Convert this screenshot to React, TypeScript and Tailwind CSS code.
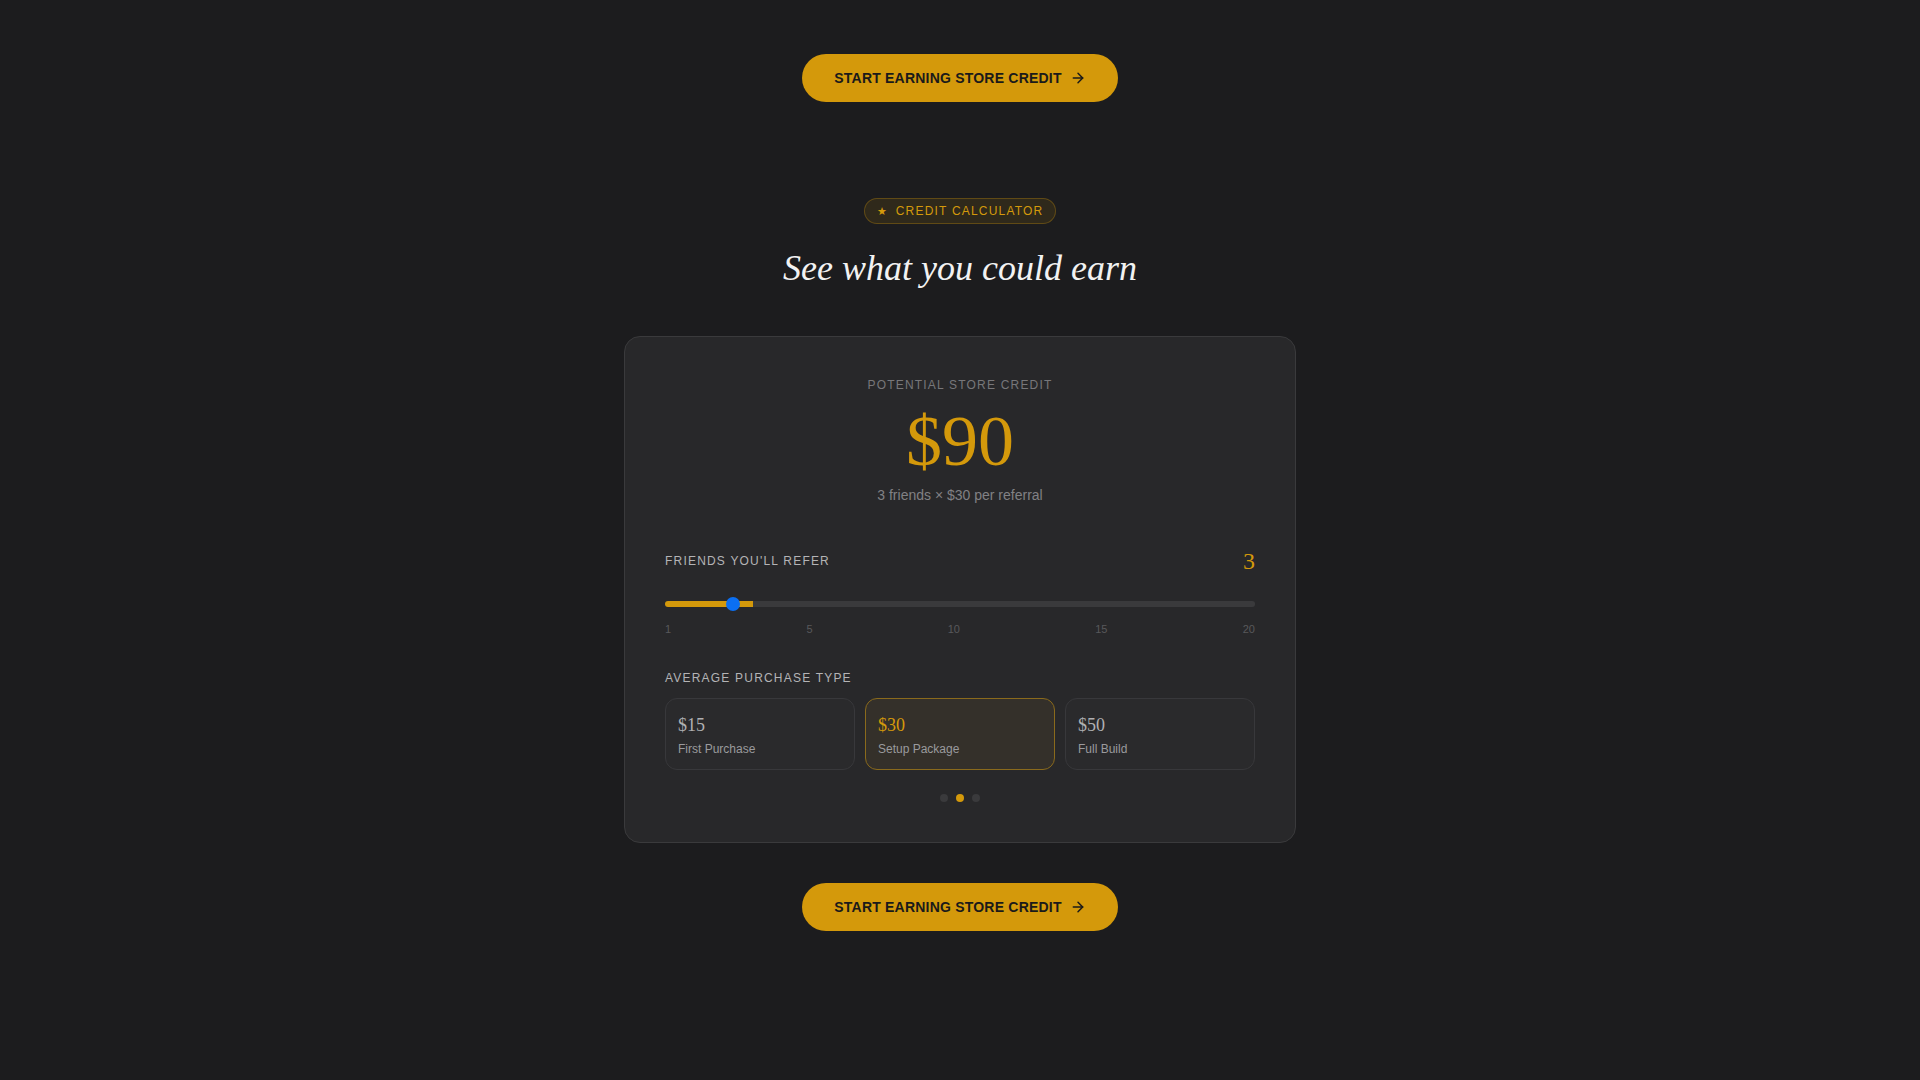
import React, { useState } from "react";
import { ArrowRight } from "lucide-react";

type Option = {
  amount: number;
  label: string;
};

const OPTIONS: Option[] = [
  { amount: 15, label: "First Purchase" },
  { amount: 30, label: "Setup Package" },
  { amount: 50, label: "Full Build" },
];

const MIN = 1;
const MAX = 20;
const TICKS = [1, 5, 10, 15, 20];

const CtaButton: React.FC = () => {
  return (
    <button
      type="button"
      className="flex items-center gap-2 rounded-full bg-[#d4990b] px-8 py-3.5 text-sm font-bold tracking-[0.015em] text-[#1a1a1a] hover:bg-[#e0a413]"
    >
      START EARNING STORE CREDIT
      <ArrowRight size={16} strokeWidth={2.25} />
    </button>
  );
};

const App: React.FC = () => {
  const [friends, setFriends] = useState(3);
  const [selected, setSelected] = useState(1);

  const perReferral = OPTIONS[selected].amount;
  const total = friends * perReferral;
  const fill = (friends / MAX) * 100;

  return (
    <div className="min-h-screen bg-[#1c1c1e] font-['Liberation_Sans',Arial,sans-serif]">
      <div className="flex flex-col items-center pt-[54px] pb-32">
        <CtaButton />

        <div className="mt-24 flex items-center gap-2 rounded-full border border-[#d4990b]/30 bg-[#d4990b]/10 px-3 py-1 text-xs tracking-widest text-[#d4990b]">
          <span className="text-[11px] leading-none">★</span>
          CREDIT CALCULATOR
        </div>

        <h2 className="mt-6 font-['Liberation_Serif',serif] text-4xl italic text-[#f2f2f2]">
          See what you could earn
        </h2>

        <div className="mt-12 w-full max-w-2xl rounded-2xl border border-[#3a3a3c] bg-[#28282a] p-10">
          <div className="flex flex-col items-center">
            <p className="text-xs tracking-widest text-[#77777a]">
              POTENTIAL STORE CREDIT
            </p>
            <p className="mt-3 font-['Liberation_Serif',serif] text-7xl text-[#d4990b]">
              ${total}
            </p>
            <p className="mt-2 text-sm text-[#818184]">
              {friends} friends × ${perReferral} per referral
            </p>
          </div>

          <div className="mt-10 flex items-center justify-between">
            <span className="text-xs tracking-widest text-[#b4b4b6]">
              FRIENDS YOU'LL REFER
            </span>
            <span className="font-['Liberation_Serif',serif] text-2xl text-[#d4990b]">
              {friends}
            </span>
          </div>

          <input
            type="range"
            min={MIN}
            max={MAX}
            value={friends}
            onChange={(e) => setFriends(Number(e.target.value))}
            className="mt-6 block h-1.5 w-full cursor-pointer appearance-none rounded-full [&::-webkit-slider-thumb]:h-3.5 [&::-webkit-slider-thumb]:w-3.5 [&::-webkit-slider-thumb]:appearance-none [&::-webkit-slider-thumb]:rounded-full [&::-webkit-slider-thumb]:bg-[#0b6ff2]"
            style={{
              background: `linear-gradient(to right, #d4990b 0%, #d4990b ${fill}%, #3a3a3c ${fill}%, #3a3a3c 100%)`,
            }}
          />

          <div className="mt-3.5 flex justify-between text-[11px] text-[#58585b]">
            {TICKS.map((t) => (
              <span key={t}>{t}</span>
            ))}
          </div>

          <p className="mt-8 text-xs tracking-widest text-[#b4b4b6]">
            AVERAGE PURCHASE TYPE
          </p>

          <div className="mt-3 grid grid-cols-3 gap-2.5">
            {OPTIONS.map((opt, i) => {
              const active = i === selected;
              return (
                <button
                  key={opt.label}
                  type="button"
                  onClick={() => setSelected(i)}
                  className={
                    active
                      ? "rounded-xl border border-[#8a6a1c] bg-[#34302a] p-3 text-left"
                      : "rounded-xl border border-[#38383b] bg-[#2a2a2c] p-3 text-left"
                  }
                >
                  <div
                    className={
                      active
                        ? "font-['Liberation_Serif',serif] text-lg text-[#d4990b]"
                        : "font-['Liberation_Serif',serif] text-lg text-[#b0b0b2]"
                    }
                  >
                    ${opt.amount}
                  </div>
                  <div className="mt-0.5 text-xs text-[#9a9a9d]">{opt.label}</div>
                </button>
              );
            })}
          </div>

          <div className="mt-6 flex justify-center gap-2">
            {OPTIONS.map((opt, i) => (
              <span
                key={opt.label}
                className={
                  i === selected
                    ? "h-2 w-2 rounded-full bg-[#d4990b]"
                    : "h-2 w-2 rounded-full bg-[#3a3a3c]"
                }
              />
            ))}
          </div>
        </div>

        <div className="mt-10">
          <CtaButton />
        </div>
      </div>
    </div>
  );
};

export default App;
